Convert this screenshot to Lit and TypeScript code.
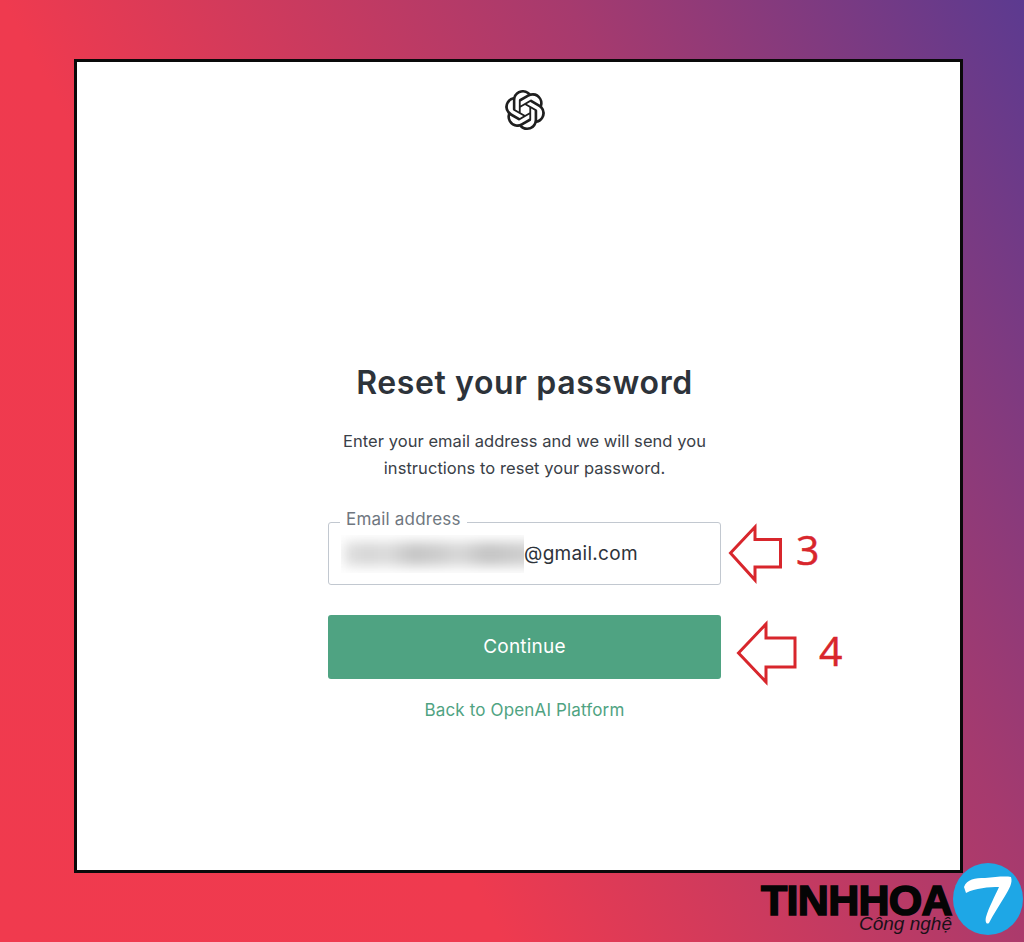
import { LitElement, html, css } from "lit";
import { customElement } from "lit/decorators.js";

@customElement("app-root")
export class AppRoot extends LitElement {
  static styles = css`
    :host {
      display: block;
      position: relative;
      width: 1024px;
      height: 942px;
      overflow: hidden;
      box-sizing: border-box;
      padding: 59px 61px 69px 74px;
      background: linear-gradient(62deg, #f03a4e 0%, #ef3a4f 33%, #a63a6e 70%, #5c3a90 100%);
      font-family: Inter, "Liberation Sans", sans-serif;
    }
    .card {
      box-sizing: border-box;
      height: 100%;
      background: #fff;
      border: 3px solid #0a0a0a;
      display: flex;
      flex-direction: column;
      align-items: center;
      padding-top: 28px;
      padding-left: 12px;
    }
    .logo {
      width: 40px;
      height: 40px;
      color: #1f1f1f;
      display: block;
      flex: none;
    }
    h1 {
      margin: 234px 0 0;
      font-size: 32px;
      line-height: 38px;
      font-weight: 600;
      color: #2d333a;
      letter-spacing: 0.62px;
    }
    p {
      margin: 26px 0 0;
      text-align: center;
      font-size: 16.5px;
      line-height: 27px;
      color: #3a4047;
      font-weight: 400;
      letter-spacing: 0.05px;
    }
    .form {
      width: 393px;
      margin-top: 40px;
      display: flex;
      flex-direction: column;
    }
    .row {
      position: relative;
    }
    .field {
      position: relative;
      box-sizing: border-box;
      height: 63px;
      border: 1px solid #c2c8d0;
      border-radius: 3px;
      display: flex;
      align-items: center;
      padding: 0 0 0 12px;
      font-size: 19px;
      letter-spacing: 0.3px;
      color: #2d333a;
    }
    .field label {
      position: absolute;
      left: 11px;
      top: -14px;
      padding: 0 6px;
      background: #fff;
      font-size: 17px;
      line-height: 20px;
      letter-spacing: 0.2px;
      color: #6f7780;
    }
    .mask {
      width: 183px;
      height: 38px;
      flex: none;
      overflow: hidden;
      display: flex;
      align-items: center;
    }
    .blurred {
      display: block;
      width: 210px;
      margin-left: 3px;
      height: 24px;
      flex: none;
      background: linear-gradient(90deg, #e0e0e0, #d6d6d6 12%, #dddddd 20%, #c6c6c6 33%, #cdcdcd 45%, #d8d8d8 55%, #c4c4c4 68%, #cecece 85%, #d4d4d4);
      filter: blur(6px);
    }
    button {
      margin-top: 30px;
      height: 64px;
      border: 0;
      border-radius: 3px;
      background: #4fa382;
      color: #fff;
      font: inherit;
      font-size: 19px;
      letter-spacing: 0.2px;
      padding: 0 0 2px;
    }
    .back {
      margin-top: 21px;
      text-align: center;
      font-size: 17px;
      line-height: 20px;
      letter-spacing: 0.15px;
      color: #4fa382;
      text-decoration: none;
    }
    .mark {
      position: absolute;
      top: 0;
      left: 0;
      overflow: visible;
      pointer-events: none;
    }
    .num {
      position: absolute;
      font-family: "Open Sans", sans-serif;
      font-size: 41px;
      line-height: 44px;
      color: #d8262c;
      -webkit-text-stroke: 0.5px #d8262c;
    }
    .n3 { left: 796px; top: 527px; }
    .n4 { left: 819px; top: 628px; }
    .wm {
      position: absolute;
      left: 761px;
      top: 884px;
      font-family: "Liberation Sans", sans-serif;
      font-weight: 700;
      font-size: 43px;
      line-height: 32px;
      letter-spacing: -0.7px;
      color: #050505;
      -webkit-text-stroke: 1.6px #050505;
      white-space: nowrap;
    }
    .sub {
      position: absolute;
      left: 859px;
      top: 915px;
      font-family: "Liberation Sans", sans-serif;
      font-style: italic;
      font-size: 19px;
      line-height: 17px;
      color: #1a1018;
      white-space: nowrap;
    }
    .badge {
      position: absolute;
      left: 953px;
      top: 863px;
      width: 70px;
      height: 72px;
    }
  `;

  render() {
    return html`
      <div class="card">
        <svg class="logo" viewBox="0 0 24 24" fill="currentColor">
          <path d="M22.2819 9.8211a5.9847 5.9847 0 0 0-.5157-4.9108 6.0462 6.0462 0 0 0-6.5098-2.9A6.0651 6.0651 0 0 0 4.9807 4.1818a5.9847 5.9847 0 0 0-3.9977 2.9 6.0462 6.0462 0 0 0 .7427 7.0966 5.98 5.98 0 0 0 .511 4.9107 6.051 6.051 0 0 0 6.5146 2.9001A5.9847 5.9847 0 0 0 13.2599 24a6.0557 6.0557 0 0 0 5.7718-4.2058 5.9894 5.9894 0 0 0 3.9977-2.9001 6.0557 6.0557 0 0 0-.7475-7.0729zm-9.022 12.6081a4.4755 4.4755 0 0 1-2.8764-1.0408l.1419-.0804 4.7783-2.7582a.7948.7948 0 0 0 .3927-.6813v-6.7369l2.02 1.1686a.071.071 0 0 1 .038.052v5.5826a4.504 4.504 0 0 1-4.4945 4.4944zm-9.6607-4.1254a4.4708 4.4708 0 0 1-.5346-3.0137l.142.0852 4.783 2.7582a.7712.7712 0 0 0 .7806 0l5.8428-3.3685v2.3324a.0804.0804 0 0 1-.0332.0615L9.74 19.9502a4.4992 4.4992 0 0 1-6.1408-1.6464zM2.3408 7.8956a4.485 4.485 0 0 1 2.3655-1.9728V11.6a.7664.7664 0 0 0 .3879.6765l5.8144 3.3543-2.0201 1.1685a.0757.0757 0 0 1-.071 0l-4.8303-2.7865A4.504 4.504 0 0 1 2.3408 7.872zm16.5963 3.8558L13.1038 8.364 15.1192 7.2a.0757.0757 0 0 1 .071 0l4.8303 2.7913a4.4944 4.4944 0 0 1-.6765 8.1042v-5.6772a.79.79 0 0 0-.407-.667zm2.0107-3.0231l-.142-.0852-4.7735-2.7818a.7759.7759 0 0 0-.7854 0L9.409 9.2297V6.8974a.0662.0662 0 0 1 .0284-.0615l4.8303-2.7866a4.4992 4.4992 0 0 1 6.6802 4.66zM8.3065 12.863l-2.02-1.1638a.0804.0804 0 0 1-.038-.0567V6.0742a4.4992 4.4992 0 0 1 7.3757-3.4537l-.142.0805L8.704 5.459a.7948.7948 0 0 0-.3927.6813zm1.0976-2.3654l2.602-1.4998 2.6069 1.4998v2.9994l-2.5974 1.4997-2.6067-1.4997Z"/>
        </svg>
        <h1>Reset your password</h1>
        <p>Enter your email address and we will send you<br />instructions to reset your password.</p>
        <div class="form">
          <div class="row">
            <div class="field">
              <label>Email address</label>
              <span class="mask"><span class="blurred"></span></span><span>@gmail.com</span>
            </div>
          </div>
          <button>Continue</button>
          <a class="back">Back to OpenAI Platform</a>
        </div>
      </div>

      <svg class="mark" width="1024" height="942" fill="none" stroke="#d8262c" stroke-width="3">
        <path d="M730.5 553 L755 527 V539.5 H780.5 V567 H755 V580 Z" />
        <path d="M738.5 653 L766 624 V638 H795 V667 H766 V682 Z" />
      </svg>
      <span class="num n3">3</span>
      <span class="num n4">4</span>

      <span class="wm">TINHHOA</span>
      <span class="sub">Công nghệ</span>
      <svg class="badge" viewBox="0 0 70 72">
        <ellipse cx="35" cy="36" rx="35" ry="36" fill="#1ea7e6" />
        <path d="M11 24 C14 16 22 15 32 15 C42 14 52 13 58 14 C60 20 56 26 52 33 C46 43 40 52 36 60 C33 62 32 58 33 54 C36 44 42 33 46 24 C36 24 22 25 13 30 Z" fill="#fff" />
      </svg>
    `;
  }
}
